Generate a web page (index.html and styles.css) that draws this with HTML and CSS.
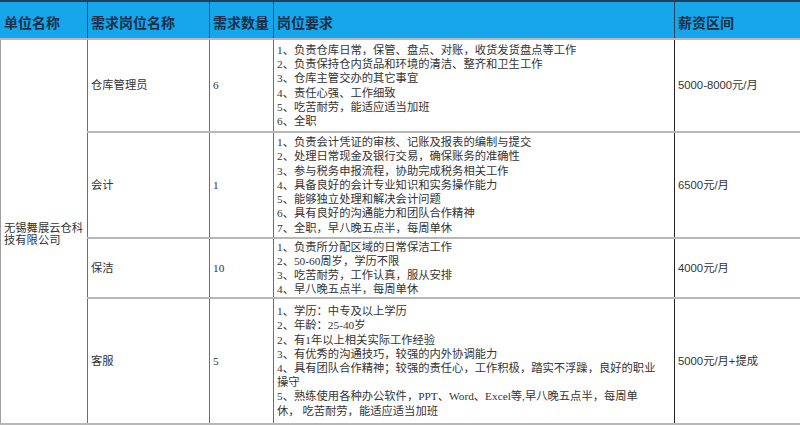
FILE: index.html
```html
<!DOCTYPE html>
<html lang="zh-CN">
<head>
<meta charset="utf-8">
<title>招聘岗位</title>
<link rel="stylesheet" href="styles.css">
</head>
<body>
<table class="jobs">
  <colgroup>
    <col class="c1"><col class="c2"><col class="c3"><col class="c4"><col class="c5">
  </colgroup>
  <thead>
    <tr class="head">
      <th>单位名称</th>
      <th>需求岗位名称</th>
      <th>需求数量</th>
      <th class="dark-right">岗位要求</th>
      <th>薪资区间</th>
    </tr>
  </thead>
  <tbody>
    <tr class="r1">
      <td rowspan="4" class="company">无锡舞展云仓科<br>技有限公司</td>
      <td>仓库管理员</td>
      <td>6</td>
      <td class="req">1、负责仓库日常，保管、盘点、对账，收货发货盘点等工作<br>2、负责保持仓内货品和环境的清洁、整齐和卫生工作<br>3、仓库主管交办的其它事宜<br>4、责任心强、工作细致<br>5、吃苦耐劳，能适应适当加班<br>6、全职</td>
      <td class="pay">5000-8000元/月</td>
    </tr>
    <tr class="r2">
      <td>会计</td>
      <td>1</td>
      <td class="req">1、负责会计凭证的审核、记账及报表的编制与提交<br>2、处理日常现金及银行交易，确保账务的准确性<br>3、参与税务申报流程，协助完成税务相关工作<br>4、具备良好的会计专业知识和实务操作能力<br>5、能够独立处理和解决会计问题<br>6、具有良好的沟通能力和团队合作精神<br>7、全职，早八晚五点半，每周单休</td>
      <td class="pay">6500元/月</td>
    </tr>
    <tr class="r3">
      <td>保洁</td>
      <td>10</td>
      <td class="req">1、负责所分配区域的日常保洁工作<br>2、50-60周岁，学历不限<br>3、吃苦耐劳，工作认真，服从安排<br>4、早八晚五点半，每周单休</td>
      <td class="pay">4000元/月</td>
    </tr>
    <tr class="r4">
      <td>客服</td>
      <td>5</td>
      <td class="req">1、学历：中专及以上学历<br>2、年龄：25-40岁<br>2、有1年以上相关实际工作经验<br>3、有优秀的沟通技巧，较强的内外协调能力<br>4、具有团队合作精神；较强的责任心，工作积极，踏实不浮躁，良好的职业<br>操守<br>5、熟练使用各种办公软件，PPT、Word、Excel等,早八晚五点半，每周单<br>休， 吃苦耐劳，能适应适当加班</td>
      <td class="pay">5000元/月+提成</td>
    </tr>
  </tbody>
</table>
</body>
</html>
```
FILE: styles.css
```css
html, body {
  margin: 0;
  padding: 0;
  background: #ffffff;
}

.jobs {
  width: 800px;
  table-layout: fixed;
  border-collapse: collapse;
  font-family: "Liberation Serif", "Noto Sans CJK SC", serif;
  font-size: 11.3px;
  color: #333333;
}

.c1 { width: 87px; }
.c2 { width: 122px; }
.c3 { width: 64px; }
.c4 { width: 401px; }
.c5 { width: 126px; }

.head {
  height: 38px;
}

.head th {
  background: #15a6ec;
  color: #1c2e45;
  font-family: "Noto Sans CJK SC", sans-serif;
  font-size: 14px;
  font-weight: 700;
  text-align: left;
  vertical-align: middle;
  padding: 3px 2px 0 3px;
  border-top: 2px solid #1f3f5e;
  border-bottom: 1px solid #2a4460;
  border-left: 1px solid #2a4460;
  border-right: 1px solid #2a4460;
  white-space: nowrap;
  overflow: hidden;
}

.head th:first-child {
  border-left: 1px solid #15a6ec;
}

.head th:last-child {
  border-right: 1px solid #8a8a8a;
}

.jobs td {
  vertical-align: middle;
  text-align: left;
  padding: 0 3px;
  line-height: 14.2px;
  border-top: 2px solid #b8b8b8;
  border-bottom: 2px solid #b8b8b8;
  border-left: 1px solid #6e6e6e;
  border-right: 1px solid #6e6e6e;
}

.jobs td.company {
  border-left: 1px solid #a0a0a0;
  line-height: 12px;
  padding-top: 5px;
}

.jobs td:nth-last-child(2).req {
  border-right: 1px solid #222222;
}

.jobs td.req {
  white-space: nowrap;
  border-left: 1px solid #444444;
}

.jobs td.pay {
  font-family: "Liberation Sans", "Noto Sans CJK SC", sans-serif;
  font-size: 11.3px;
  border-right: 1px solid #9a9a9a;
  border-left: 1px solid #222222;
}

.r1 { height: 93px; }
.r2 { height: 106px; }
.r3 { height: 60px; }
.r4 { height: 126px; }
```
